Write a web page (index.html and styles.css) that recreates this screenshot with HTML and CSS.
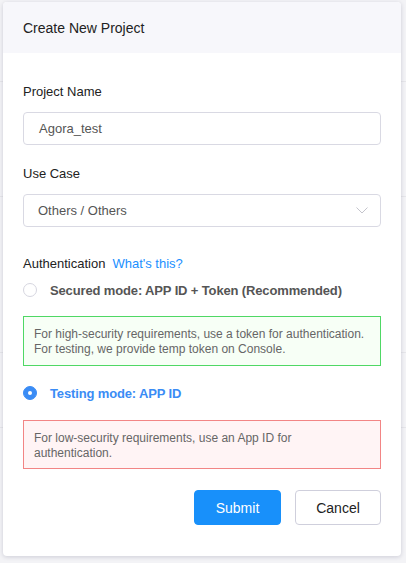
FILE: index.html
```html
<!DOCTYPE html>
<html>
<head>
<meta charset="utf-8">
<link rel="stylesheet" href="styles.css">
</head>
<body>
<div class="backdrop">
  <div class="bg-row r1"></div>
  <div class="bg-row r2"></div>
  <div class="bg-row r3"></div>
  <div class="bg-row r4"></div>
</div>
<div class="modal">
  <div class="modal-header">Create New Project</div>
  <div class="modal-body">
    <div class="label">Project Name</div>
    <div class="input">Agora_test</div>
    <div class="label label-gap">Use Case</div>
    <div class="input select">
      <span>Others / Others</span>
      <svg class="chevron" width="12" height="7" viewBox="0 0 12 7"><path d="M0.5 0.5 L6 6 L11.5 0.5" fill="none" stroke="#c4c4cc" stroke-width="1"/></svg>
    </div>
    <div class="auth-row">
      <span class="auth-label">Authentication</span>
      <span class="link">What's this?</span>
    </div>
    <div class="radio-row first">
      <span class="radio"></span>
      <span class="radio-text">Secured mode: APP ID + Token (Recommended)</span>
    </div>
    <div class="note note-green">For high-security requirements, use a token for authentication. For testing, we provide temp token on Console.</div>
    <div class="radio-row checked">
      <span class="radio on"></span>
      <span class="radio-text">Testing mode: APP ID</span>
    </div>
    <div class="note note-red">For low-security requirements, use an App ID for authentication.</div>
    <div class="actions">
      <button class="btn btn-primary">Submit</button>
      <button class="btn btn-default">Cancel</button>
    </div>
  </div>
</div>
</body>
</html>
```
FILE: styles.css
```css
* { box-sizing: border-box; }
html, body { margin: 0; padding: 0; }
body {
  width: 406px;
  height: 563px;
  background: #f3f3f6;
  font-family: "Liberation Sans", Arial, Helvetica, sans-serif;
  position: relative;
  overflow: hidden;
}
.backdrop { position: absolute; inset: 0; }
.bg-row { position: absolute; left: 0; right: 0; height: 1px; background: #e6e6ea; }
.r1 { top: 81px; }
.r2 { top: 196px; }
.r3 { top: 352px; }
.r4 { top: 427px; }
.modal {
  position: absolute;
  left: 3px;
  top: 2px;
  width: 398px;
  background: #fff;
  border-radius: 4px;
  box-shadow: 0 1px 4px rgba(40, 40, 80, 0.18);
  overflow: hidden;
}
.modal-header {
  height: 51px;
  background: #f7f7fb;
  padding-left: 20px;
  font-size: 14px;
  line-height: 53px;
  color: #222;
}
.modal-body {
  padding: 30px 20px 31px 20px;
}
.label {
  font-size: 13px;
  line-height: 18px;
  color: #222;
}
.label-gap { margin-top: 20px; }
.input {
  margin-top: 11px;
  height: 33px;
  border: 1px solid #d9d9e3;
  border-radius: 4px;
  padding-left: 15px;
  font-size: 13px;
  line-height: 31px;
  color: #555;
}
.select {
  display: flex;
  align-items: center;
  justify-content: space-between;
  padding-left: 14px;
  padding-right: 12px;
}
.chevron { display: block; }
.auth-row {
  margin-top: 28px;
  font-size: 13px;
  line-height: 18px;
  display: flex;
  gap: 7px;
}
.auth-label { color: #222; }
.link { color: #1a8fff; }
.radio-row {
  display: flex;
  align-items: center;
  height: 18px;
  font-size: 13px;
  font-weight: bold;
  letter-spacing: -0.14px;
}
.radio-row.first { margin-top: 8px; }
.radio-row.checked { margin-top: 18px; color: #3a8cf5; }
.radio-row.first .radio-text { color: #555; }
.radio {
  width: 14px;
  height: 14px;
  border: 1px solid #d6d6e0;
  border-radius: 50%;
  margin-right: 13px;
  flex: none;
  background: #fff;
  position: relative;
}
.radio.on {
  background: #3a8cf5;
  border-color: #3a8cf5;
}
.radio.on::after {
  content: "";
  position: absolute;
  left: 4px;
  top: 4px;
  width: 4px;
  height: 4px;
  border-radius: 50%;
  background: #fff;
}
.note {
  font-size: 12px;
  line-height: 14.5px;
  color: #666;
  padding: 10px 10px 8px 10px;
}
.note-green {
  margin-top: 17px;
  height: 50px;
  border: 1px solid #4fd865;
  background: #f7fff6;
}
.note-red {
  margin-top: 18px;
  height: 49px;
  border: 1px solid #f28585;
  background: #fff4f5;
}
.actions {
  margin-top: 21px;
  display: flex;
  justify-content: flex-end;
  gap: 14px;
}
.btn {
  height: 35px;
  width: 87px;
  border-radius: 4px;
  font-family: inherit;
  font-size: 14px;
  padding: 0;
  cursor: pointer;
}
.btn-primary {
  background: #1890fa;
  border: 1px solid #1890fa;
  color: #fff;
}
.btn-default {
  width: 86px;
  background: #fff;
  border: 1px solid #cfcfdc;
  color: #222;
}
```
